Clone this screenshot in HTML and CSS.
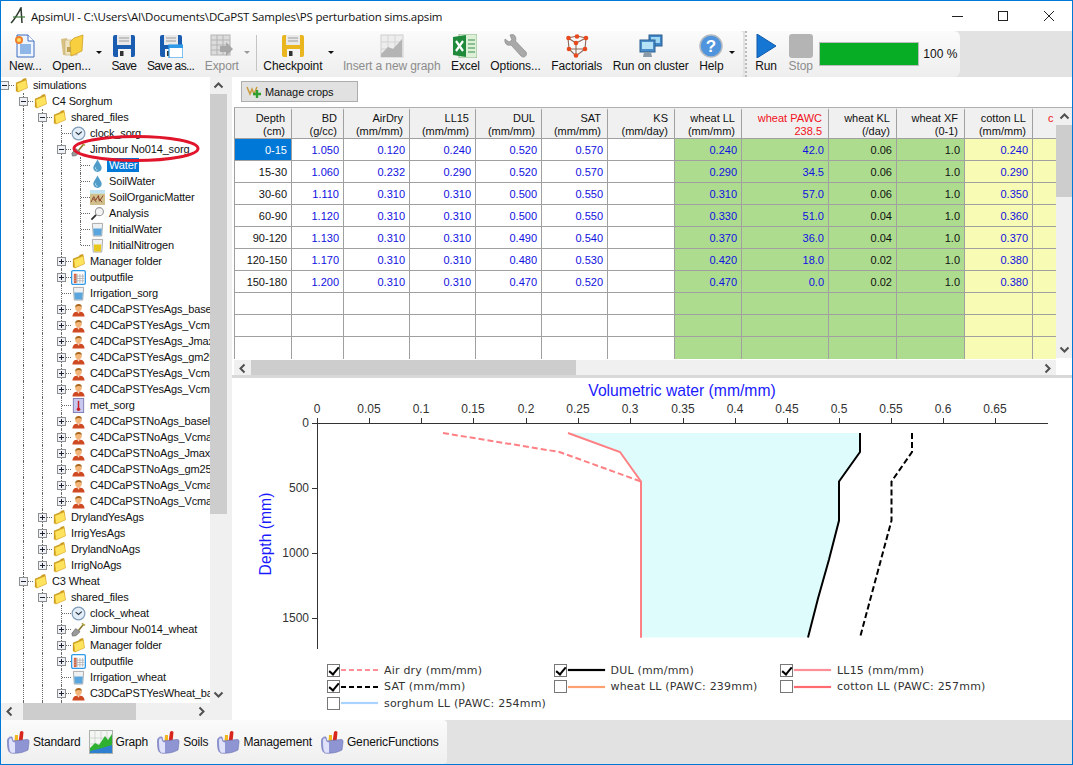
FILE: index.html
```html
<!DOCTYPE html>
<html lang="en">
<head>
    <meta charset="UTF-8">
    <title>ApsimUI</title>
    <link rel="stylesheet" href="styles.css">
</head>
<body>
<svg class="defs" width="0" height="0">
    <symbol id="folder" viewBox="0 0 16 16">
        <path d="M2 5 L9 2 L9 1 L13 0 L14 10 L4 15 L2 14Z" fill="#c99a1e"/>
        <path d="M3 6 L13 2 L14.5 10.5 L4 15Z" fill="#ffe35c" stroke="#d7a92a" stroke-width=".7"/>
    </symbol>
    <symbol id="person" viewBox="0 0 16 16">
        <path d="M1.5 15.5 C2 10.5 5 10 8 10 C11 10 14 10.500 14.500 15.500Z" fill="#cf4a22"/>
        <circle cx="8" cy="6" r="3.600" fill="#f3b678"/>
        <path d="M4.500 5.500 C4.500 1.500 11.500 1 11.500 5 C9.500 3.800 7 3.800 4.500 5.500Z" fill="#a8651e"/>
        <path d="M6.500 10 L8 12.500 L9.500 10Z" fill="#ffd9b0"/>
    </symbol>
    <symbol id="clock" viewBox="0 0 16 16">
        <circle cx="8" cy="8" r="6.800" fill="#e3edf7" stroke="#7f9cb8" stroke-width="1.300"/>
        <path d="M5 6.500 L8 9 L11.500 6" fill="none" stroke="#26323e" stroke-width="1.200"/>
    </symbol>
    <symbol id="shovel" viewBox="0 0 16 16">
        <path d="M8 9 L13 3" stroke="#8a7a2c" stroke-width="1.800"/>
        <path d="M11.500 1.500 L15 3.500" stroke="#b3a23c" stroke-width="1.600"/>
        <path d="M1 12 L5 7 L9.500 10.500 L5.500 14.500 L1.500 15Z" fill="#9a9a9a" stroke="#5f5f5f" stroke-width=".7"/>
    </symbol>
    <symbol id="drop" viewBox="0 0 16 16">
        <path d="M8 1.500 C9.500 5 12.500 7.500 12.500 10.500 C12.500 13.200 10.500 14.800 8 14.800 C5.500 14.800 3.500 13.200 3.500 10.500 C3.500 7.500 6.500 5 8 1.500Z" fill="#4f9cc9"/>
        <path d="M6 10 C5.500 11.500 6.500 13 8 13" stroke="#d4edf8" fill="none"/>
    </symbol>
    <symbol id="soil" viewBox="0 0 16 16">
        <rect y="0" width="16" height="4" fill="#bfe3f2"/>
        <rect y="4" width="16" height="12" fill="#cfc08c"/>
        <path d="M1 13 L4 7 L6 11 L9 6 L10 12 L14 6 M3 9 L7 13 M9 9 L13 13" stroke="#8a3d2a" fill="none"/>
    </symbol>
    <symbol id="lens" viewBox="0 0 16 16">
        <circle cx="10" cy="6" r="4.300" fill="#f4f4f4" stroke="#9a9a9a" stroke-width="1.200"/>
        <path d="M6.500 9.500 L1.500 14.500" stroke="#333" stroke-width="2"/>
    </symbol>
    <symbol id="beaker" viewBox="0 0 16 16">
        <path d="M2.500 1.500 H13.500 L12.500 15 H3.500Z" fill="#eef0f2" stroke="#a8a8a8"/>
        <path d="M3.400 7 H12.600 L12 14.500 H4Z" fill="#5aa6dc"/>
    </symbol>
    <symbol id="beaker-n" viewBox="0 0 16 16">
        <path d="M2.500 1.500 H13.500 L12.500 15 H3.500Z" fill="#eef0f2" stroke="#a8a8a8"/>
        <path d="M4 7 H12 L11.500 14.500 H4.500Z" fill="#e8c81c"/>
    </symbol>
    <symbol id="table" viewBox="0 0 16 16">
        <rect x=".7" y=".7" width="14.600" height="14.600" rx="1.500" fill="#fff" stroke="#2f9be8" stroke-width="1.400"/>
        <rect x="3" y="4" width="3" height="10" fill="#e0603c"/>
        <path d="M6.500 4 V14 M9.500 4 V14 M12.500 4 V14 M3 6.500 H14 M3 9 H14 M3 11.500 H14" stroke="#aaa" stroke-width=".8"/>
    </symbol>
    <symbol id="thermo" viewBox="0 0 16 16">
        <rect x="2.500" y=".5" width="11" height="15" fill="#c9c9ef" stroke="#7d7db5"/>
        <path d="M8 3 V11" stroke="#c9202a" stroke-width="1.600"/>
        <circle cx="8" cy="12" r="1.900" fill="#c9202a"/>
    </symbol>
    <symbol id="box" viewBox="0 0 24 24">
        <path d="M12.500 12 L14 2 Q15.500 0 17.500 2 L16.500 12Z" fill="#d8261c"/>
        <path d="M8.500 12 L9 5 L12 5 L12 12Z" fill="#f0b820"/>
        <path d="M1.500 11 C1.500 7.500 4 6.500 6 7 L7 11 L21 9.500 C23 9.500 23 10.500 23 12 L22 20 C18 22.500 10 24 5 23 C2 22 1.500 18 1.500 11Z" fill="#8f94d2" stroke="#6a6fae" stroke-width=".6"/>
        <path d="M3 11 C3 8.500 4.500 8 5.500 8.500 C6 11 7 12.500 9 12.500 L9 22.700 C7 23 5 23 4.500 22 C3.300 20 3 16 3 11Z" fill="#dfe2fa"/>
    </symbol>
    <symbol id="graph" viewBox="0 0 24 24">
        <rect x=".5" y=".5" width="23" height="23" fill="#f4f6f4" stroke="#a8b0a8"/>
        <path d="M0 8 H24 M0 14 H24 M6 0 V24 M12 0 V24 M18 0 V24" stroke="#c4cac4" stroke-width=".7"/>
        <path d="M1 18 L6 13 L10 15 L16 6 L19 10 L23 4 V17 L13 19 L1 22Z" fill="#2fb030"/>
        <path d="M1 21 L13 18 L23 15 V23 H1Z" fill="#2e7fd0"/>
    </symbol>
    <symbol id="floppy" viewBox="0 0 24 24">
        <path d="M1 3 Q1 1 3 1 H21 Q23 1 23 3 V21 Q23 23 21 23 H3 Q1 23 1 21Z" fill="currentColor"/>
        <rect x="5" y="1" width="14" height="10" fill="#e9e9e9"/>
        <path d="M7 4 H17 M7 7 H17" stroke="#9a9a9a"/>
        <rect x="6" y="15" width="13" height="8" fill="#f4f4f4"/>
        <rect x="8" y="17" width="3.500" height="5" fill="#333"/>
    </symbol>
    <symbol id="new" viewBox="0 0 24 24">
        <path d="M4 1 H15 L21 7 V23 H4Z" fill="#eef4fd" stroke="#3e6cc0"/>
        <path d="M15 1 V7 H21" fill="#fff" stroke="#3e6cc0"/>
        <rect x="7" y="10" width="11" height="10" fill="#8eb6e6"/>
        <circle cx="6" cy="6" r="4" fill="#f08030"/>
        <circle cx="6" cy="6" r="2" fill="#ffe060"/>
    </symbol>
    <symbol id="open" viewBox="0 0 24 24">
        <path d="M1 5 L7 4 L8 21 L3 21Z" fill="#d9c184"/>
        <rect x="5" y="6" width="12" height="15" fill="#efe4c0" stroke="#c9b37a" stroke-width=".7"/>
        <path d="M10 8 L14 4 L17 3 L23 1 L22 17 L11 22Z" fill="#f7cf3f" stroke="#c99a1e" stroke-width=".7"/>
        <rect x="7" y="13" width="4" height="5" fill="#c3a24e"/>
    </symbol>
    <symbol id="window" viewBox="0 0 24 24">
        <rect x="10" y="11" width="14" height="13" fill="#fff" stroke="#2f9be8" stroke-width="1.200"/>
        <rect x="10" y="11" width="14" height="3" fill="#2f9be8"/>
    </symbol>
    <symbol id="export" viewBox="0 0 24 24">
        <rect x="1" y="1" width="19" height="20" fill="#d8d8d8" stroke="#a8a8a8"/>
        <path d="M1 6 H20 M1 11 H20 M1 16 H20 M7 1 V21 M13 1 V21" stroke="#a8a8a8"/>
        <path d="M10 12 H16 V8 L23 15 L16 22 V18 H10Z" fill="#9a9a9a"/>
    </symbol>
    <symbol id="chart" viewBox="0 0 24 24">
        <rect x="1" y="1" width="22" height="22" fill="#ececec" stroke="#c8c8c8"/>
        <path d="M1 8 H23 M1 15 H23 M8 1 V23 M15 1 V23" stroke="#cdcdcd"/>
        <path d="M1 20 L8 13 L13 15 L22 5 V23 H1Z" fill="#a9a9a9"/>
    </symbol>
    <symbol id="excel" viewBox="0 0 24 24">
        <path d="M6 0 H24 V24 H6Z" fill="#dff0d8" stroke="#8db88a"/>
        <path d="M0 3 L13 1 V23 L0 21Z" fill="#1f8a3c"/>
        <path d="M3 7 L10 17 M10 7 L3 17" stroke="#fff" stroke-width="2.200"/>
        <path d="M15 6 H22 M15 10 H22 M15 14 H22 M15 18 H22" stroke="#6fb07a" stroke-width="1.300"/>
    </symbol>
    <symbol id="wrench" viewBox="0 0 24 24">
        <path d="M1 5 L5 8 L8 6 L6 1 C10 -1 13 3 11.500 7 L22 18 C24 21 20 25 17 22 L7 11 C3 12.500 0 9 1 5Z" fill="#a9a9a9" stroke="#808080" stroke-width=".6"/>
    </symbol>
    <symbol id="cube" viewBox="0 0 24 24">
        <path d="M3 4 L12 2 L21 4 L20 15 L11 22 L4 15Z M3 4 L11 9 L21 4 M11 9 V22 M4 15 L20 15" fill="none" stroke="#8c6a5a" stroke-width="1.100"/>
        <g fill="#e8481c">
            <circle cx="3.500" cy="4" r="2.300"/><circle cx="12" cy="2.500" r="2.300"/><circle cx="21" cy="4" r="2.300"/>
            <circle cx="11" cy="9" r="2.300"/><circle cx="4" cy="15" r="2.300"/><circle cx="20" cy="15" r="2.300"/><circle cx="11" cy="21.500" r="2.300"/>
        </g>
    </symbol>
    <symbol id="cluster" viewBox="0 0 24 24">
        <rect x="10" y="1" width="13" height="11" fill="#3f86c8" stroke="#2c5f8f"/>
        <rect x="12" y="3" width="9" height="6" fill="#9fd8f4"/>
        <rect x="1" y="6" width="15" height="12" fill="#4a8fc9" stroke="#2c5f8f"/>
        <rect x="3" y="8" width="11" height="7" fill="#b5e2f6"/>
        <path d="M5 18 H12 L13 23 H4Z" fill="#8a9aa8"/>
    </symbol>
    <symbol id="help" viewBox="0 0 24 24">
        <circle cx="12" cy="12" r="11" fill="#4f94dc" stroke="#b5b9c0" stroke-width="1.500"/>
        <text x="12" y="18" text-anchor="middle" class="help-mark">?</text>
    </symbol>
    <symbol id="run" viewBox="0 0 20 24">
        <path d="M1 0 L20 12 L1 24Z" fill="#1676d4" stroke="#0f5aa8"/>
    </symbol>
    <symbol id="up" viewBox="0 0 17 17"><path d="M4.500 10.500 L8.500 6.500 L12.500 10.500" fill="none" stroke="#505050" stroke-width="2"/></symbol>
    <symbol id="down" viewBox="0 0 17 17"><path d="M4.500 6.500 L8.500 10.500 L12.500 6.500" fill="none" stroke="#505050" stroke-width="2"/></symbol>
    <symbol id="left" viewBox="0 0 17 17"><path d="M10.500 4.500 L6.500 8.500 L10.500 12.500" fill="none" stroke="#505050" stroke-width="2"/></symbol>
    <symbol id="right" viewBox="0 0 17 17"><path d="M6.500 4.500 L10.500 8.500 L6.500 12.500" fill="none" stroke="#505050" stroke-width="2"/></symbol>
</svg>

<div class="window">
    <div class="titlebar">
        <svg class="logo" viewBox="0 0 16 18">
            <path d="M1 16 C5 12 8 6 11 1 L12 16" fill="none" stroke="#2c3a2c" stroke-width="1.500"/>
            <path d="M3 10 H15" stroke="#3f7a3a" stroke-width="1.200"/>
        </svg>
        <span class="title-text">ApsimUI - C:\Users\AI\Documents\DCaPST Samples\PS perturbation sims.apsim</span>
        <div class="win-buttons">
            <svg viewBox="0 0 46 30"><path d="M18 15.500 H29" stroke="#222"/></svg>
            <svg viewBox="0 0 46 30"><rect x="18.500" y="10.500" width="9" height="9" fill="none" stroke="#222"/></svg>
            <svg viewBox="0 0 46 30"><path d="M18 10 L28 20 M28 10 L18 20" stroke="#222"/></svg>
        </div>
    </div>

    <div class="toolbar">
        <div class="strip">
            <div class="tool"><svg class="tool-icon"><use href="#new"/></svg><span>New...</span></div>
            <div class="tool"><svg class="tool-icon"><use href="#open"/></svg><span>Open...</span></div>
            <i class="caret"></i>
            <div class="tool tool-save"><svg class="tool-icon"><use href="#floppy"/></svg><span class="tight">Save</span></div>
            <div class="tool tool-save"><span class="stack"><svg class="tool-icon"><use href="#floppy"/></svg><svg class="tool-icon over"><use href="#window"/></svg></span><span class="tight">Save as...</span></div>
            <div class="tool off"><svg class="tool-icon"><use href="#export"/></svg><span>Export</span></div>
            <i class="caret caret-off"></i>
            <i class="sep"></i>
            <div class="tool tool-check"><svg class="tool-icon"><use href="#floppy"/></svg><span>Checkpoint</span></div>
            <i class="caret"></i>
            <div class="tool off"><svg class="tool-icon"><use href="#chart"/></svg><span>Insert a new graph</span></div>
            <div class="tool"><svg class="tool-icon"><use href="#excel"/></svg><span>Excel</span></div>
            <div class="tool"><svg class="tool-icon"><use href="#wrench"/></svg><span>Options...</span></div>
            <div class="tool"><svg class="tool-icon"><use href="#cube"/></svg><span>Factorials</span></div>
            <div class="tool"><svg class="tool-icon"><use href="#cluster"/></svg><span>Run on cluster</span></div>
            <div class="tool"><svg class="tool-icon"><use href="#help"/></svg><span>Help</span></div>
            <i class="caret"></i>
        </div>
        <div class="strip strip-run">
            <div class="tool"><svg class="tool-icon"><use href="#run"/></svg><span>Run</span></div>
            <div class="tool off"><span class="stop-box"></span><span>Stop</span></div>
            <div class="progress"></div>
            <span class="percent">100 %</span>
        </div>
    </div>

    <div class="main">
        <div class="tree-pane">
            <div class="tree-top">
                <div class="tree">
                    <div class="row"><i class="t root"><b class="box"></b></i><svg class="ic"><use href="#folder"/></svg><span>simulations</span></div>
                    <div class="row"><i></i><i class="t"><b class="box"></b></i><svg class="ic"><use href="#folder"/></svg><span>C4 Sorghum</span></div>
                    <div class="row"><i></i><i class="v"></i><i class="t"><b class="box"></b></i><svg class="ic"><use href="#folder"/></svg><span>shared_files</span></div>
                    <div class="row"><i></i><i class="v"></i><i class="v"></i><i class="t"></i><svg class="ic"><use href="#clock"/></svg><span>clock_sorg</span></div>
                    <div class="row"><i></i><i class="v"></i><i class="v"></i><i class="t"><b class="box"></b></i><svg class="ic"><use href="#shovel"/></svg><span>Jimbour No014_sorg</span></div>
                    <div class="row"><i></i><i class="v"></i><i class="v"></i><i class="v"></i><i class="t"></i><svg class="ic"><use href="#drop"/></svg><span class="selected">Water</span></div>
                    <div class="row"><i></i><i class="v"></i><i class="v"></i><i class="v"></i><i class="t"></i><svg class="ic"><use href="#drop"/></svg><span>SoilWater</span></div>
                    <div class="row"><i></i><i class="v"></i><i class="v"></i><i class="v"></i><i class="t"></i><svg class="ic"><use href="#soil"/></svg><span>SoilOrganicMatter</span></div>
                    <div class="row"><i></i><i class="v"></i><i class="v"></i><i class="v"></i><i class="t"></i><svg class="ic"><use href="#lens"/></svg><span>Analysis</span></div>
                    <div class="row"><i></i><i class="v"></i><i class="v"></i><i class="v"></i><i class="t"></i><svg class="ic"><use href="#beaker"/></svg><span>InitialWater</span></div>
                    <div class="row"><i></i><i class="v"></i><i class="v"></i><i class="v"></i><i class="t last"></i><svg class="ic"><use href="#beaker-n"/></svg><span>InitialNitrogen</span></div>
                    <div class="row"><i></i><i class="v"></i><i class="v"></i><i class="t"><b class="box plus"></b></i><svg class="ic"><use href="#folder"/></svg><span>Manager folder</span></div>
                    <div class="row"><i></i><i class="v"></i><i class="v"></i><i class="t"><b class="box plus"></b></i><svg class="ic"><use href="#table"/></svg><span>outputfile</span></div>
                    <div class="row"><i></i><i class="v"></i><i class="v"></i><i class="t"></i><svg class="ic"><use href="#beaker"/></svg><span>Irrigation_sorg</span></div>
                    <div class="row"><i></i><i class="v"></i><i class="v"></i><i class="t"><b class="box plus"></b></i><svg class="ic"><use href="#person"/></svg><span>C4DCaPSTYesAgs_baseline</span></div>
                    <div class="row"><i></i><i class="v"></i><i class="v"></i><i class="t"><b class="box plus"></b></i><svg class="ic"><use href="#person"/></svg><span>C4DCaPSTYesAgs_Vcmax20</span></div>
                    <div class="row"><i></i><i class="v"></i><i class="v"></i><i class="t"><b class="box plus"></b></i><svg class="ic"><use href="#person"/></svg><span>C4DCaPSTYesAgs_Jmax20</span></div>
                    <div class="row"><i></i><i class="v"></i><i class="v"></i><i class="t"><b class="box plus"></b></i><svg class="ic"><use href="#person"/></svg><span>C4DCaPSTYesAgs_gm25</span></div>
                    <div class="row"><i></i><i class="v"></i><i class="v"></i><i class="t"><b class="box plus"></b></i><svg class="ic"><use href="#person"/></svg><span>C4DCaPSTYesAgs_Vcmax30</span></div>
                    <div class="row"><i></i><i class="v"></i><i class="v"></i><i class="t"><b class="box plus"></b></i><svg class="ic"><use href="#person"/></svg><span>C4DCaPSTYesAgs_Vcmax40</span></div>
                    <div class="row"><i></i><i class="v"></i><i class="v"></i><i class="t"></i><svg class="ic"><use href="#thermo"/></svg><span>met_sorg</span></div>
                    <div class="row"><i></i><i class="v"></i><i class="v"></i><i class="t"><b class="box plus"></b></i><svg class="ic"><use href="#person"/></svg><span>C4DCaPSTNoAgs_baseline</span></div>
                    <div class="row"><i></i><i class="v"></i><i class="v"></i><i class="t"><b class="box plus"></b></i><svg class="ic"><use href="#person"/></svg><span>C4DCaPSTNoAgs_Vcmax20</span></div>
                    <div class="row"><i></i><i class="v"></i><i class="v"></i><i class="t"><b class="box plus"></b></i><svg class="ic"><use href="#person"/></svg><span>C4DCaPSTNoAgs_Jmax20</span></div>
                    <div class="row"><i></i><i class="v"></i><i class="v"></i><i class="t"><b class="box plus"></b></i><svg class="ic"><use href="#person"/></svg><span>C4DCaPSTNoAgs_gm25</span></div>
                    <div class="row"><i></i><i class="v"></i><i class="v"></i><i class="t"><b class="box plus"></b></i><svg class="ic"><use href="#person"/></svg><span>C4DCaPSTNoAgs_Vcmax30</span></div>
                    <div class="row"><i></i><i class="v"></i><i class="v"></i><i class="t"><b class="box plus"></b></i><svg class="ic"><use href="#person"/></svg><span>C4DCaPSTNoAgs_Vcmax40</span></div>
                    <div class="row"><i></i><i class="v"></i><i class="t"><b class="box plus"></b></i><svg class="ic"><use href="#folder"/></svg><span>DrylandYesAgs</span></div>
                    <div class="row"><i></i><i class="v"></i><i class="t"><b class="box plus"></b></i><svg class="ic"><use href="#folder"/></svg><span>IrrigYesAgs</span></div>
                    <div class="row"><i></i><i class="v"></i><i class="t"><b class="box plus"></b></i><svg class="ic"><use href="#folder"/></svg><span>DrylandNoAgs</span></div>
                    <div class="row"><i></i><i class="v"></i><i class="t last"><b class="box plus"></b></i><svg class="ic"><use href="#folder"/></svg><span>IrrigNoAgs</span></div>
                    <div class="row"><i></i><i class="t"><b class="box"></b></i><svg class="ic"><use href="#folder"/></svg><span>C3 Wheat</span></div>
                    <div class="row"><i></i><i class="v"></i><i class="t"><b class="box"></b></i><svg class="ic"><use href="#folder"/></svg><span>shared_files</span></div>
                    <div class="row"><i></i><i class="v"></i><i class="v"></i><i class="t"></i><svg class="ic"><use href="#clock"/></svg><span>clock_wheat</span></div>
                    <div class="row"><i></i><i class="v"></i><i class="v"></i><i class="t"><b class="box plus"></b></i><svg class="ic"><use href="#shovel"/></svg><span>Jimbour No014_wheat</span></div>
                    <div class="row"><i></i><i class="v"></i><i class="v"></i><i class="t"><b class="box plus"></b></i><svg class="ic"><use href="#folder"/></svg><span>Manager folder</span></div>
                    <div class="row"><i></i><i class="v"></i><i class="v"></i><i class="t"><b class="box plus"></b></i><svg class="ic"><use href="#table"/></svg><span>outputfile</span></div>
                    <div class="row"><i></i><i class="v"></i><i class="v"></i><i class="t"></i><svg class="ic"><use href="#beaker"/></svg><span>Irrigation_wheat</span></div>
                    <div class="row"><i></i><i class="v"></i><i class="v"></i><i class="t"><b class="box plus"></b></i><svg class="ic"><use href="#person"/></svg><span>C3DCaPSTYesWheat_baseline</span></div>
                    <div class="row"><i></i><i class="v"></i><i class="v"></i><i class="t"><b class="box plus"></b></i><svg class="ic"><use href="#person"/></svg></div>
                    <svg class="circled" viewBox="0 0 209 140"><ellipse cx="135" cy="71.500" rx="62" ry="12" fill="none" stroke="#e0142a" stroke-width="3"/></svg>
                </div>
                <div class="vscroll tree-v">
                    <svg class="arrow"><use href="#up"/></svg>
                    <div class="thumb"></div>
                    <svg class="arrow end"><use href="#down"/></svg>
                </div>
            </div>
            <div class="hscroll tree-h">
                <svg class="arrow"><use href="#left"/></svg>
                <div class="thumb"></div>
                <svg class="arrow end"><use href="#right"/></svg>
            </div>
        </div>

        <div class="content">
            <div class="crops-bar">
                <div class="crops-btn">
                    <svg width="16" height="16" viewBox="0 0 16 16">
                        <path d="M1 3 L4 10 L6 5 L8 10 L11 3" fill="none" stroke="#c89a3c" stroke-width="1.500"/>
                        <path d="M11 6 V14 M7 10 H15" stroke="#2fa02f" stroke-width="2.400"/>
                    </svg>
                    <span>Manage crops</span>
                </div>
            </div>

            <div class="grid-area">
                <div class="grid-wrap">
                    <table class="soil-grid">
                        <colgroup>
                            <col class="w57"><col class="w52"><col class="w66"><col class="w66"><col class="w66"><col class="w66"><col class="w67"><col class="w67"><col class="w87"><col class="w68"><col class="w68"><col class="w68"><col class="w68">
                        </colgroup>
                        <tr>
                            <th>Depth<br>(cm)</th><th>BD<br>(g/cc)</th><th>AirDry<br>(mm/mm)</th><th>LL15<br>(mm/mm)</th><th>DUL<br>(mm/mm)</th><th>SAT<br>(mm/mm)</th><th>KS<br>(mm/day)</th><th>wheat LL<br>(mm/mm)</th><th class="red">wheat PAWC<br>238.5</th><th>wheat KL<br>(/day)</th><th>wheat XF<br>(0-1)</th><th>cotton LL<br>(mm/mm)</th><th class="red left">c</th>
                        </tr>
                        <tr><td class="current">0-15</td><td class="b">1.050</td><td class="b">0.120</td><td class="b">0.240</td><td class="b">0.520</td><td class="b">0.570</td><td></td><td class="g b">0.240</td><td class="g b">42.0</td><td class="g">0.06</td><td class="g">1.0</td><td class="y b">0.240</td><td class="y"></td></tr>
                        <tr><td>15-30</td><td class="b">1.060</td><td class="b">0.232</td><td class="b">0.290</td><td class="b">0.520</td><td class="b">0.570</td><td></td><td class="g b">0.290</td><td class="g b">34.5</td><td class="g">0.06</td><td class="g">1.0</td><td class="y b">0.290</td><td class="y"></td></tr>
                        <tr><td>30-60</td><td class="b">1.110</td><td class="b">0.310</td><td class="b">0.310</td><td class="b">0.500</td><td class="b">0.550</td><td></td><td class="g b">0.310</td><td class="g b">57.0</td><td class="g">0.06</td><td class="g">1.0</td><td class="y b">0.350</td><td class="y"></td></tr>
                        <tr><td>60-90</td><td class="b">1.120</td><td class="b">0.310</td><td class="b">0.310</td><td class="b">0.500</td><td class="b">0.550</td><td></td><td class="g b">0.330</td><td class="g b">51.0</td><td class="g">0.04</td><td class="g">1.0</td><td class="y b">0.360</td><td class="y"></td></tr>
                        <tr><td>90-120</td><td class="b">1.130</td><td class="b">0.310</td><td class="b">0.310</td><td class="b">0.490</td><td class="b">0.540</td><td></td><td class="g b">0.370</td><td class="g b">36.0</td><td class="g">0.04</td><td class="g">1.0</td><td class="y b">0.370</td><td class="y"></td></tr>
                        <tr><td>120-150</td><td class="b">1.170</td><td class="b">0.310</td><td class="b">0.310</td><td class="b">0.480</td><td class="b">0.530</td><td></td><td class="g b">0.420</td><td class="g b">18.0</td><td class="g">0.02</td><td class="g">1.0</td><td class="y b">0.380</td><td class="y"></td></tr>
                        <tr><td>150-180</td><td class="b">1.200</td><td class="b">0.310</td><td class="b">0.310</td><td class="b">0.470</td><td class="b">0.520</td><td></td><td class="g b">0.470</td><td class="g b">0.0</td><td class="g">0.02</td><td class="g">1.0</td><td class="y b">0.380</td><td class="y"></td></tr>
                        <tr><td></td><td></td><td></td><td></td><td></td><td></td><td></td><td class="g"></td><td class="g"></td><td class="g"></td><td class="g"></td><td class="y"></td><td class="y"></td></tr>
                        <tr><td></td><td></td><td></td><td></td><td></td><td></td><td></td><td class="g"></td><td class="g"></td><td class="g"></td><td class="g"></td><td class="y"></td><td class="y"></td></tr>
                        <tr><td></td><td></td><td></td><td></td><td></td><td></td><td></td><td class="g"></td><td class="g"></td><td class="g"></td><td class="g"></td><td class="y"></td><td class="y"></td></tr>
                    </table>
                    <div class="hscroll grid-h">
                        <svg class="arrow"><use href="#left"/></svg>
                        <div class="thumb"></div>
                        <svg class="arrow end"><use href="#right"/></svg>
                    </div>
                </div>
                <div class="vscroll grid-v">
                    <svg class="arrow"><use href="#up"/></svg>
                    <div class="thumb"></div>
                    <svg class="arrow end"><use href="#down"/></svg>
                </div>
            </div>
            <div class="splitter"></div>

            <div class="graph">
                <svg class="plot" viewBox="232 380 840 282">
                    <polygon points="568,433 860,433 860,452 839,481.500 839,520.500 829,559.500 818,598.500 808,637.500 641,637.500 641,481.500 620,452" fill="#dffcfd"/>
                    <polyline points="443,433 559.500,452 641,481.500 641,637.500" class="ln pink dash"/>
                    <polyline points="568,433 620,452 641,481.500 641,637.500" class="ln pink"/>
                    <polyline points="860,433 860,452 839,481.500 839,520.500 829,559.500 818,598.500 808,637.500" class="ln dark"/>
                    <polyline points="912,433 912,452 891.500,481.500 891.500,520.500 881,559.500 870.500,598.500 860,637.500" class="ln dark dash"/>
                    <path class="axis" d="M317.500 423.500 H1048 M317.500 418 V649 M369.500 418 V423 M421.500 418 V423 M473.500 418 V423 M526.500 418 V423 M578.500 418 V423 M630.500 418 V423 M683.500 418 V423 M735.500 418 V423 M787.500 418 V423 M839.500 418 V423 M891.500 418 V423 M943.500 418 V423 M995.500 418 V423 M312 423.500 H317 M312 488.500 H317 M312 553.500 H317 M312 618.500 H317"/>
                    <text x="682" y="396" class="axis-title">Volumetric water (mm/mm)</text>
                    <text x="271" y="534" class="axis-title" transform="rotate(-90 271 534)">Depth (mm)</text>
                    <g class="tick-x">
                        <text x="317" y="413">0</text><text x="369" y="413">0.05</text><text x="421" y="413">0.1</text><text x="473" y="413">0.15</text><text x="526" y="413">0.2</text><text x="578" y="413">0.25</text><text x="630" y="413">0.3</text><text x="683" y="413">0.35</text><text x="735" y="413">0.4</text><text x="787" y="413">0.45</text><text x="839" y="413">0.5</text><text x="891" y="413">0.55</text><text x="943" y="413">0.6</text><text x="995" y="413">0.65</text>
                    </g>
                    <g class="tick-y">
                        <text x="309" y="427">0</text><text x="309" y="492">500</text><text x="309" y="557">1000</text><text x="309" y="622">1500</text>
                    </g>
                </svg>
                <div class="legend">
                    <div class="item"><span class="check on"></span><span class="swatch s-dash" style="--c:#ff8f96"></span><span>Air dry (mm/mm)</span></div>
                    <div class="item"><span class="check on"></span><span class="swatch" style="--c:#000"></span><span>DUL (mm/mm)</span></div>
                    <div class="item"><span class="check on"></span><span class="swatch" style="--c:#ff8f96"></span><span>LL15 (mm/mm)</span></div>
                    <div class="item"><span class="check on"></span><span class="swatch s-dash" style="--c:#000"></span><span>SAT (mm/mm)</span></div>
                    <div class="item"><span class="check"></span><span class="swatch" style="--c:#ffa070"></span><span>wheat LL (PAWC: 239mm)</span></div>
                    <div class="item"><span class="check"></span><span class="swatch" style="--c:#ff6a70"></span><span>cotton LL (PAWC: 257mm)</span></div>
                    <div class="item"><span class="check"></span><span class="swatch" style="--c:#a8d4ff"></span><span>sorghum LL (PAWC: 254mm)</span></div>
                </div>
            </div>
        </div>
    </div>

    <div class="tabs">
        <div class="tab-strip">
            <div class="tab"><svg><use href="#box"/></svg><span>Standard</span></div>
            <div class="tab"><svg><use href="#graph"/></svg><span>Graph</span></div>
            <div class="tab"><svg><use href="#box"/></svg><span>Soils</span></div>
            <div class="tab"><svg><use href="#box"/></svg><span>Management</span></div>
            <div class="tab"><svg><use href="#box"/></svg><span>GenericFunctions</span></div>
        </div>
    </div>
</div>
</body>
</html>
```

FILE: styles.css
```css
* {
    box-sizing: border-box;
}
html, body {
    margin: 0;
    height: 100%;
}
body {
    font-family: "Liberation Sans", Arial, sans-serif;
    font-size: 11px;
    color: #111;
    overflow: hidden;
}
.defs {
    position: absolute;
}
.help-mark {
    font: bold 17px "Liberation Sans", sans-serif;
    fill: #fff;
}
.window {
    display: flex;
    flex-direction: column;
    width: 1073px;
    height: 765px;
    border: 1px solid #0078d7;
    background: #fff;
}

/* title bar */
.titlebar {
    display: flex;
    align-items: center;
    height: 30px;
    padding-left: 9px;
    flex: none;
}
.logo {
    width: 16px;
    height: 18px;
    margin-right: 5px;
    flex: none;
}
.title-text {
    font-family: "Open Sans", sans-serif;
    font-size: 11.5px;
    letter-spacing: -.2px;
}
.win-buttons {
    display: flex;
    margin-left: auto;
}
.win-buttons svg {
    width: 46px;
    height: 30px;
}

/* toolbar */
.toolbar {
    display: flex;
    height: 46px;
    flex: none;
    background: #e2e2e2;
}
.strip {
    display: flex;
    align-items: flex-start;
    padding-left: 3px;
    width: 742px;
    flex: none;
    background: linear-gradient(#fbfbfb, #eeeeee);
    border-radius: 0 3px 3px 0;
}
.strip-run {
    width: 215px;
    margin-left: 2px;
    padding-left: 2px;
    border-left: 2px dotted #bbb;
    border-radius: 0 6px 6px 0;
}
.tool {
    display: flex;
    flex-direction: column;
    align-items: center;
    padding: 3px 5px 0;
    margin-right: .5px;
    font-size: 12px;
    white-space: nowrap;
    flex: none;
}
.tool span:last-child {
    margin-top: 1px;
    line-height: 14px;
    letter-spacing: -.1px;
}
.tool span.tight {
    letter-spacing: -.6px;
}
.tool-icon {
    display: block;
    width: 24px;
    height: 24px;
}
.tool-save {
    color: #1a5cb0;
}
.tool-check {
    color: #e9b61f;
}
.tool-save span:last-child, .tool-check span:last-child {
    color: #111;
}
.stack {
    position: relative;
    display: block;
    margin-top: 0 !important;
}
.over {
    position: absolute;
    left: 0;
    top: 0;
}
.off {
    color: #8c8c8c;
}
.off .tool-icon {
    opacity: .85;
}
.caret {
    width: 6px;
    height: 3px;
    margin: 20px 4px 0 0;
    border-left: 3px solid transparent;
    border-right: 3px solid transparent;
    border-top: 3px solid #111;
    flex: none;
}
.caret-off {
    border-top-color: #999;
}
.sep {
    width: 1px;
    height: 36px;
    margin: 4px 1px 0 2px;
    background: #c4c4c4;
    flex: none;
}
.stop-box {
    display: block;
    width: 24px;
    height: 24px;
    border-radius: 3px;
    background: #b4b4b4;
    margin-top: 0 !important;
}
.progress {
    width: 100px;
    height: 24px;
    margin: 11px 0 0 1px;
    background: #07ad25;
    border: 1px solid #bcbcbc;
    flex: none;
}
.percent {
    margin: 16px 0 0 4px;
    font-size: 12px;
    white-space: nowrap;
}

/* main split */
.main {
    display: flex;
    height: 643px;
    flex: none;
    background: #f0f0f0;
}
.tree-pane {
    display: flex;
    flex-direction: column;
    width: 226px;
    flex: none;
}
.tree-top {
    display: flex;
    flex: 1;
    min-height: 0;
}
.tree {
    position: relative;
    width: 209px;
    overflow: hidden;
    flex: none;
    background: #fff;
}
.row {
    display: flex;
    align-items: center;
    height: 16px;
    margin-left: -6px;
    white-space: nowrap;
    letter-spacing: -.15px;
}
.row i {
    position: relative;
    display: block;
    width: 19px;
    height: 16px;
    flex: none;
}
.row .v::before, .row .t::before {
    content: "";
    position: absolute;
    left: 9px;
    top: 0;
    height: 16px;
    border-left: 1px dotted #666;
}
.row .t::after {
    content: "";
    position: absolute;
    left: 10px;
    top: 8px;
    width: 9px;
    border-top: 1px dotted #666;
}
.row .root::before {
    display: none;
}
.row .last::before {
    height: 8px;
}
.box {
    position: absolute;
    z-index: 1;
    left: 5px;
    top: 4px;
    width: 9px;
    height: 9px;
    background: #eef1f5;
    border: 1px solid #8e8f8f;
}
.box::before {
    content: "";
    position: absolute;
    left: 1px;
    top: 3px;
    width: 5px;
    height: 1px;
    background: #223;
}
.plus::after {
    content: "";
    position: absolute;
    left: 3px;
    top: 1px;
    width: 1px;
    height: 5px;
    background: #223;
}
.ic {
    width: 15px;
    height: 15px;
    margin-right: 4px;
    flex: none;
}
.selected {
    background: #0078d7;
    color: #fff;
    padding: 1px 2px;
    margin-left: -2px;
}
.circled {
    position: absolute;
    left: 0;
    top: 0;
    width: 209px;
    height: 140px;
    pointer-events: none;
}

/* scrollbars */
.vscroll, .hscroll {
    display: flex;
    background: #f0f0f0;
    flex: none;
}
.vscroll {
    flex-direction: column;
    width: 17px;
}
.hscroll {
    height: 17px;
    align-items: center;
}
.arrow {
    display: block;
    width: 17px;
    height: 17px;
    flex: none;
}
.thumb {
    background: #cdcdcd;
    flex: none;
}
.end {
    margin-top: auto;
}
.hscroll .end {
    margin-top: 0;
    margin-left: auto;
}
.tree-v .thumb {
    height: 420px;
}
.tree-h {
    padding-right: 17px;
}
.tree-h .thumb {
    width: 113px;
    height: 17px;
    margin-left: 5px;
}
.grid-v .thumb {
    height: 72px;
}
.grid-h .thumb {
    width: 325px;
    height: 16px;
}

/* right hand side */
.content {
    display: flex;
    flex-direction: column;
    width: 840px;
    margin-left: 5px;
    flex: none;
    background: #fff;
}
.crops-bar {
    height: 31px;
    padding: 4px 0 0 7px;
    border-bottom: 1px solid #b0b0b0;
    margin-left: 2px;
    flex: none;
}
.crops-btn {
    display: flex;
    align-items: center;
    gap: 3px;
    width: 117px;
    height: 21px;
    padding-left: 4px;
    background: #e1e1e1;
    border: 1px solid #adadad;
    font-size: 11px;
    letter-spacing: -.1px;
}
.grid-area {
    display: flex;
    height: 267px;
    padding-left: 2px;
    flex: none;
}
.grid-wrap {
    width: 822px;
    height: 267px;
    overflow: hidden;
    flex: none;
}
.soil-grid {
    table-layout: fixed;
    width: 867px;
    height: 250px;
    border-collapse: separate;
    border-spacing: 0;
    border-left: 1px solid #a0a0a0;
}
.w57 { width: 57px; }
.w52 { width: 52px; }
.w66 { width: 66px; }
.w67 { width: 67px; }
.w68 { width: 68px; }
.w87 { width: 87px; }
.soil-grid tr {
    height: 22px;
}
.soil-grid tr:first-child {
    height: 30px;
}
.soil-grid tr:last-child td {
    border-bottom: 0;
}
.soil-grid th {
    padding: 2px 6px 0 0;
    font-weight: normal;
    text-align: right;
    line-height: 13px;
    white-space: nowrap;
    overflow: hidden;
    background: #f0f0f0;
    border-right: 1px solid #a0a0a0;
    border-bottom: 1px solid #a0a0a0;
    border-top: 2px solid #f0f0f0;
}
.soil-grid th.left {
    text-align: left;
    padding-left: 15px;
    vertical-align: top;
}
.soil-grid td {
    padding: 0 4px 0 0;
    text-align: right;
    border-right: 1px solid #a0a0a0;
    border-bottom: 1px solid #a0a0a0;
}
.soil-grid .b {
    color: #1010e0;
}
.soil-grid .red {
    color: #f01020;
}
.soil-grid .g {
    background: #addc8f;
}
.soil-grid .y {
    background: #f7fbb4;
}
.soil-grid .current {
    background: #0078d7;
    color: #fff;
}
.grid-h {
    width: 822px;
    height: 16px;
    margin-top: 1px;
}
.grid-v {
    width: 16px;
    height: 250px;
}
.splitter {
    height: 3px;
    background: #d8d8d8;
    flex: none;
}

/* graph */
.graph {
    display: flex;
    flex-direction: column;
    flex: 1;
    min-height: 0;
    padding-top: 2px;
}
.plot {
    display: block;
    width: 840px;
    height: 282px;
    flex: none;
}
.ln {
    fill: none;
    stroke-width: 2;
}
.pink {
    stroke: #ff8084;
}
.dark {
    stroke: #000;
}
.dash {
    stroke-dasharray: 6 3;
}
.axis {
    fill: none;
    stroke: #333;
    stroke-width: 1;
}
.axis-title {
    font-size: 15.7px;
    fill: #1a1aff;
    text-anchor: middle;
}
.tick-x text {
    font-size: 12px;
    fill: #333;
    text-anchor: middle;
}
.tick-y text {
    font-size: 12px;
    fill: #333;
    text-anchor: end;
}
.legend {
    display: grid;
    grid-template-columns: 226.5px 226.5px 226.5px;
    grid-auto-rows: 16.5px;
    padding-left: 95px;
    font-family: "DejaVu Sans", sans-serif;
    font-size: 11px;
    letter-spacing: .2px;
    color: #333;
}
.item {
    display: flex;
    align-items: center;
}
.check {
    position: relative;
    width: 13px;
    height: 13px;
    margin-right: 1px;
    background: #fff;
    border: 1px solid #777;
    flex: none;
}
.check.on::after {
    content: "";
    position: absolute;
    left: 3px;
    top: 0;
    width: 4px;
    height: 8px;
    border: solid #000;
    border-width: 0 2px 2px 0;
    transform: rotate(40deg);
}
.swatch {
    width: 37px;
    height: 2px;
    margin-right: 6px;
    background: var(--c);
    box-shadow: 0 0 1px var(--c);
    flex: none;
}
.s-dash {
    background: repeating-linear-gradient(90deg, var(--c) 0 5px, transparent 5px 8px);
    box-shadow: none;
}

/* bottom tabs */
.tabs {
    display: flex;
    flex: 1;
    background: #e2e2e2;
}
.tab-strip {
    display: flex;
    align-items: center;
    width: 446px;
    padding-left: 5px;
    background: linear-gradient(#fbfbfb, #efefef);
    border-radius: 0 4px 4px 0;
}
.tab {
    display: flex;
    align-items: center;
    gap: 3px;
    padding-right: 8px;
    font-size: 12px;
    letter-spacing: -.15px;
}
.tab svg {
    width: 24px;
    height: 24px;
}
```
